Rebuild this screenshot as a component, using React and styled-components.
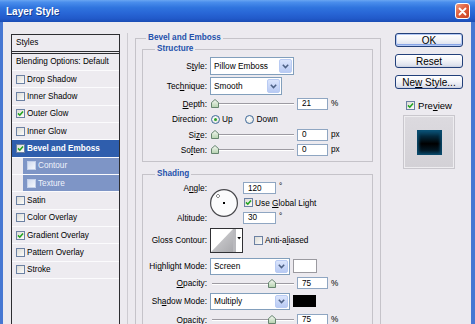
import React from 'react';
import styled, { createGlobalStyle } from 'styled-components';

const FONT = `"Liberation Sans", Arial, sans-serif`;

const GlobalStyle = createGlobalStyle`
  html, body { margin: 0; padding: 0; }
  body { background: #ECEAEF; font-family: ${FONT}; overflow: hidden; }
  #root { width: 475px; height: 324px; }
`;

const Window = styled.div`
  width: 475px;
  height: 324px;
  display: flex;
  flex-direction: column;
  overflow: hidden;
  background: #ECEAEF;
  color: #000;
  font-family: ${FONT};
  font-size: 8.2px;
`;

const TitleBar = styled.div`
  flex: none;
  height: 22px;
  box-sizing: border-box;
  display: flex;
  align-items: center;
  justify-content: space-between;
  padding: 0 5px 0 6px;
  background: linear-gradient(to bottom, #6aa6f2 0%, #4a8eec 10%, #2f74de 35%, #2866d6 60%, #2159c9 85%, #1a4cb4 100%);
`;

const Title = styled.span`
  color: #fff;
  font: bold 10px ${FONT};
  text-shadow: 1px 1px 0 #163f93;
`;

const CloseButton = styled.span`
  width: 15px;
  height: 16px;
  box-sizing: border-box;
  border: 1px solid #fff;
  border-radius: 3px;
  background: linear-gradient(135deg, #f19a7c 0%, #e0603f 45%, #c9401f 100%);
  display: flex;
  align-items: center;
  justify-content: center;
`;

const Frame = styled.div`
  flex: 1;
  min-height: 0;
  display: flex;
  align-items: stretch;
  border-left: 3px solid #4677d3;
  border-right: 4px solid #4677d3;
  padding: 11px 8px 0 8px;
`;

/* ---------- left style list ---------- */
const StyleList = styled.div`
  flex: none;
  width: 109px;
  box-sizing: border-box;
  margin-top: 1px;
  border: 1px solid #2d2d31;
  border-bottom: none;
  background: #EDEBF0;
`;

const ListHeader = styled.div`
  height: 16px;
  line-height: 16px;
  padding-left: 4px;
  border-bottom: 3px double #2d2d31;
`;

const BlendRow = styled.div`
  height: 17px;
  box-sizing: border-box;
  line-height: 16px;
  padding-left: 4px;
  border-bottom: 1px solid #fbfbfd;
  white-space: nowrap;
`;

const EffectRow = styled.div`
  height: 17.35px;
  box-sizing: border-box;
  display: flex;
  border-bottom: 1px solid #fbfbfd;
  padding-left: ${p => (p.$sub ? 11 : 0)}px;
`;

const EffectCell = styled.div`
  flex: 1;
  display: flex;
  align-items: center;
  gap: 2px;
  padding-left: 4px;
  white-space: nowrap;
  background: ${p => (p.$selected ? '#2f5ead' : p.$sub ? '#7e95c6' : 'transparent')};
  color: ${p => (p.$selected ? '#fff' : p.$sub ? '#eef2fb' : '#000')};
  font-weight: ${p => (p.$selected ? 'bold' : 'normal')};
`;

const CheckBoxBox = styled.span`
  flex: none;
  width: 9px;
  height: 9px;
  box-sizing: border-box;
  margin-left: ${p => p.$ml || 0}px;
  border: 1px solid ${p => (p.$light ? '#c3d0ea' : '#6c81a3')};
  background: ${p =>
    p.$light
      ? 'linear-gradient(135deg, #d2dcf0, #f4f7fc)'
      : 'linear-gradient(135deg, #dcdbd5, #fcfcfb)'};
  display: inline-flex;
  align-items: center;
  justify-content: center;
`;

function Check({ checked, light, ml }) {
  return (
    <CheckBoxBox $light={light} $ml={ml}>
      {checked && (
        <svg width="7" height="7" viewBox="0 0 7 7">
          <path d="M1 3.4 L2.8 5.2 L6 1.5" fill="none" stroke="#21a321" strokeWidth="1.6" />
        </svg>
      )}
    </CheckBoxBox>
  );
}

/* ---------- middle ---------- */
const Middle = styled.div`
  flex: none;
  width: 254px;
  box-sizing: border-box;
  margin-left: 7px;
  padding-left: 7px;
  border-left: 1px solid #cdcbd1;
`;

const Group = styled.fieldset`
  margin: ${p => p.$mt || 0}px 0 0 0;
  min-width: 0;
  border: 1px solid #c5c3c9;
  padding: ${p => p.$pad};
`;

const Legend = styled.legend`
  margin-left: ${p => p.$ml}px;
  padding: 0 2px;
  font: bold 8.2px/10px ${FONT};
  color: #2451ab;
`;

const Form = styled.div`
  display: grid;
  grid-template-columns: 64px auto;
  column-gap: 3px;
  grid-template-rows: ${p => p.$rows};
  align-items: center;
  justify-items: start;
`;

const Label = styled.span`
  justify-self: end;
  white-space: nowrap;
  font-size: 8.3px;
  grid-row: ${p => p.$row || 'auto'};
  grid-column: 1;
`;

const Cell = styled.div`
  grid-column: 2;
  grid-row: ${p => p.$row || 'auto'};
  display: flex;
  align-items: center;
`;

const U = styled.span`
  text-decoration: underline;
`;

const Select = styled.div`
  width: ${p => p.$w}px;
  height: ${p => p.$h || 18}px;
  box-sizing: border-box;
  border: 1px solid #829fbc;
  background: #fff;
  display: flex;
  align-items: center;
  padding: 1px;
`;

const SelectText = styled.span`
  flex: 1;
  padding-left: 2px;
  font-size: 8.3px;
  white-space: nowrap;
`;

const SelectButton = styled.span`
  width: 13px;
  align-self: stretch;
  box-sizing: border-box;
  border: 1px solid #b9cbf3;
  border-radius: 2px;
  background: linear-gradient(#dbe5fc, #b8caf3);
  display: flex;
  align-items: center;
  justify-content: center;
`;

function Dropdown({ w, h, value }) {
  return (
    <Select $w={w} $h={h}>
      <SelectText>{value}</SelectText>
      <SelectButton>
        <svg width="7" height="5" viewBox="0 0 7 5">
          <path d="M0.8 0.8 L3.5 3.6 L6.2 0.8" fill="none" stroke="#4d6185" strokeWidth="1.5" />
        </svg>
      </SelectButton>
    </Select>
  );
}

const SliderTrack = styled.div`
  position: relative;
  width: 84px;
  height: 13px;
  flex: none;
  &::before {
    content: '';
    position: absolute;
    left: 2px;
    right: 0;
    top: 6px;
    height: 1px;
    background: #9d9ba2;
    box-shadow: 0 1px 0 #fff;
  }
`;

const ThumbSvg = styled.svg`
  position: absolute;
  top: 2px;
  margin-left: -4px;
`;

function Slider({ pct }) {
  return (
    <SliderTrack>
      <ThumbSvg width="8" height="9" viewBox="0 0 8 9" style={{ left: `${4.5 + pct * 0.773}px` }}>
        <defs>
          <linearGradient id="thumbg" x1="0" y1="0" x2="0" y2="1">
            <stop offset="0" stopColor="#f6f8f4" />
            <stop offset="1" stopColor="#b4d2ae" />
          </linearGradient>
        </defs>
        <path d="M0.5 8.5 V3.6 L4 0.5 L7.5 3.6 V8.5 Z" fill="url(#thumbg)" stroke="#66856f" strokeWidth="1" />
      </ThumbSvg>
    </SliderTrack>
  );
}

const Field = styled.span`
  flex: none;
  display: flex;
  align-items: center;
  box-sizing: border-box;
  width: ${p => p.$w}px;
  height: 12px;
  margin-left: ${p => p.$ml || 0}px;
  border: 1px solid #8fa6c2;
  background: #fff;
  padding-left: 4px;
  font-size: 8.2px;
`;

const Unit = styled.span`
  margin-left: 3px;
  font-size: 8.2px;
  align-self: ${p => (p.$sup ? 'flex-start' : 'center')};
  line-height: 9px;
`;

const RadioDot = styled.span`
  flex: none;
  width: 9px;
  height: 9px;
  box-sizing: border-box;
  margin-left: ${p => p.$ml || 0}px;
  border-radius: 50%;
  border: 1px solid #3e6a9c;
  background: radial-gradient(circle at 40% 40%, #ffffff, #dcdbd5);
  display: inline-flex;
  align-items: center;
  justify-content: center;
  &::after {
    content: '';
    width: ${p => (p.$on ? 3 : 0)}px;
    height: ${p => (p.$on ? 3 : 0)}px;
    border-radius: 50%;
    background: #2aa22a;
  }
`;

const OptionText = styled.span`
  margin-left: ${p => p.$ml ?? 2}px;
  font-size: 8.3px;
  white-space: nowrap;
`;

const AngleBlock = styled.div`
  grid-column: 2;
  grid-row: 1 / span 3;
  display: grid;
  grid-template-columns: 28px auto;
  grid-template-rows: 14px 15px 15px;
  column-gap: 5px;
  align-items: center;
`;

const AngleDial = styled.svg`
  grid-row: 1 / span 3;
  grid-column: 1;
`;

const AngleLine = styled.div`
  grid-column: 2;
  display: flex;
  align-items: center;
`;

const ContourPicker = styled.svg`
  flex: none;
`;

const Swatch = styled.span`
  flex: none;
  width: ${p => p.$w}px;
  height: ${p => p.$h}px;
  box-sizing: border-box;
  margin-left: 3px;
  border: 1px solid ${p => p.$border};
  background: ${p => p.$color};
`;

/* ---------- right side ---------- */
const Side = styled.div`
  flex: none;
  width: 68px;
  margin-left: 14px;
  display: flex;
  flex-direction: column;
  align-items: center;
  gap: 7px;
`;

const Button = styled.div`
  width: 68px;
  height: 14px;
  box-sizing: border-box;
  border: 1px solid #22407a;
  border-radius: 3px;
  background: linear-gradient(#ffffff 0%, #f3f4f8 45%, #dfe3ee 85%, #c8cedf 100%);
  display: flex;
  align-items: center;
  justify-content: center;
  font-size: 10px;
  white-space: nowrap;
  box-shadow: ${p => (p.$default ? 'inset 0 0 0 1px #b4c9f4, inset 0 -1px 0 1px #88a5e6' : 'none')};
`;

const PreviewRow = styled.div`
  display: flex;
  align-items: center;
  gap: 3px;
  margin-top: 4px;
  font-size: 9.5px;
`;

const PreviewFrame = styled.div`
  width: 52px;
  height: 54px;
  box-sizing: border-box;
  margin-top: -3px;
  border: 1px solid #c9c7cd;
  background: linear-gradient(#dcdadf, #d3d1d6);
  box-shadow: inset 0 0 0 1px #eeedf0;
  display: flex;
  align-items: center;
  justify-content: center;
`;

const PreviewSwatch = styled.div`
  width: 25px;
  height: 25px;
  background: linear-gradient(#0d5a80 0%, #03283c 25%, #000 55%, #021622 80%, #0a4766 100%);
  box-shadow: inset 2px 0 3px #0b4c6e, inset -2px 0 3px #0b4c6e;
`;

const effects = [
  { name: 'Drop Shadow' },
  { name: 'Inner Shadow' },
  { name: 'Outer Glow', checked: true },
  { name: 'Inner Glow' },
  { name: 'Bevel and Emboss', checked: true, selected: true },
  { name: 'Contour', sub: true },
  { name: 'Texture', sub: true },
  { name: 'Satin' },
  { name: 'Color Overlay' },
  { name: 'Gradient Overlay', checked: true },
  { name: 'Pattern Overlay' },
  { name: 'Stroke' },
];

export default function App() {
  return (
    <Window>
      <GlobalStyle />
      <TitleBar>
        <Title>Layer Style</Title>
        <CloseButton>
          <svg width="9" height="9" viewBox="0 0 9 9">
            <path d="M1.5 1.5 L7.5 7.5 M7.5 1.5 L1.5 7.5" stroke="#fff" strokeWidth="1.8" strokeLinecap="round" />
          </svg>
        </CloseButton>
      </TitleBar>
      <Frame>
        <StyleList>
          <ListHeader>Styles</ListHeader>
          <BlendRow>Blending Options: Default</BlendRow>
          {effects.map(e => (
            <EffectRow key={e.name} $sub={e.sub}>
              <EffectCell $selected={e.selected} $sub={e.sub}>
                <Check checked={e.checked} light={e.sub} />
                <span>{e.name}</span>
              </EffectCell>
            </EffectRow>
          ))}
        </StyleList>

        <Middle>
          <Group $pad="1px 7px 0 6px">
            <Legend $ml={4}>Bevel and Emboss</Legend>
            <Group $pad="2px 0 4px 0">
              <Legend $ml={12}>Structure</Legend>
              <Form $rows="20px 20px 15px 16px 15px 15px">
                <Label>S<U>t</U>yle:</Label>
                <Cell><Dropdown w={84} value="Pillow Emboss" /></Cell>
                <Label>Tec<U>h</U>nique:</Label>
                <Cell><Dropdown w={72} value="Smooth" /></Cell>
                <Label><U>D</U>epth:</Label>
                <Cell><Slider pct={0} /><Field $w={31} $ml={3}>21</Field><Unit>%</Unit></Cell>
                <Label>Direction:</Label>
                <Cell>
                  <RadioDot $on $ml={1} /><OptionText>Up</OptionText>
                  <RadioDot $ml={12} /><OptionText $ml={3}>Down</OptionText>
                </Cell>
                <Label>Si<U>z</U>e:</Label>
                <Cell><Slider pct={0} /><Field $w={31} $ml={3}>0</Field><Unit>px</Unit></Cell>
                <Label>So<U>f</U>ten:</Label>
                <Cell><Slider pct={0} /><Field $w={31} $ml={3}>0</Field><Unit>px</Unit></Cell>
              </Form>
            </Group>

            <Group $mt={7} $pad="2px 0 4px 0">
              <Legend $ml={12}>Shading</Legend>
              <Form $rows="14px 15px 15px 30px 22px 12px 24px 13px">
                <Label $row={1}>A<U>n</U>gle:</Label>
                <AngleBlock>
                  <AngleDial width="28" height="28" viewBox="0 0 28 28">
                    <circle cx="14" cy="14" r="13.4" fill="#fbfbfc" stroke="#48484c" strokeWidth="1.2" />
                    <rect x="13" y="13" width="2" height="2" fill="#000" />
                    <path d="M8 5 V6 M8 8 V9 M6 7 H7 M9 7 H10" stroke="#222" strokeWidth="1" />
                  </AngleDial>
                  <AngleLine><Field $w={33}>120</Field><Unit $sup>°</Unit></AngleLine>
                  <AngleLine>
                    <Check checked ml={1} />
                    <OptionText>Use <U>G</U>lobal Light</OptionText>
                  </AngleLine>
                  <AngleLine><Field $w={33}>30</Field><Unit $sup>°</Unit></AngleLine>
                </AngleBlock>
                <Label $row={3}>Altitude:</Label>
                <Label $row={4}>Gloss Contour:</Label>
                <Cell $row={4}>
                  <ContourPicker width="33" height="25" viewBox="0 0 33 25">
                    <defs>
                      <linearGradient id="cg" x1="0" y1="0" x2="1" y2="1">
                        <stop offset="0" stopColor="#d9d9db" />
                        <stop offset="1" stopColor="#a9a9ad" />
                      </linearGradient>
                    </defs>
                    <rect x="0.5" y="0.5" width="32" height="24" fill="#fff" stroke="#303034" />
                    <path d="M1 24 L23 1 L23 24 Z" fill="url(#cg)" />
                    <rect x="23" y="1" width="3" height="23" fill="#b9b9bd" />
                    <path d="M27.3 9 H31 L29.15 11.6 Z" fill="#000" />
                  </ContourPicker>
                  <Check ml={11} />
                  <OptionText>Anti-a<U>l</U>iased</OptionText>
                </Cell>
                <Label $row={5}>Hi<U>g</U>hlight Mode:</Label>
                <Cell $row={5}>
                  <Dropdown w={80} h={17} value="Screen" />
                  <Swatch $w={24} $h={14} $color="#fff" $border="#9b9aa0" />
                </Cell>
                <Label $row={6}><U>O</U>pacity:</Label>
                <Cell $row={6}><Slider pct={75} /><Field $w={31} $ml={3}>75</Field><Unit>%</Unit></Cell>
                <Label $row={7}>Sh<U>a</U>dow Mode:</Label>
                <Cell $row={7}>
                  <Dropdown w={80} h={17} value="Multiply" />
                  <Swatch $w={23} $h={12} $color="#000" $border="#000" />
                </Cell>
                <Label $row={8}>Opa<U>c</U>ity:</Label>
                <Cell $row={8}><Slider pct={75} /><Field $w={31} $ml={3}>75</Field><Unit>%</Unit></Cell>
              </Form>
            </Group>
          </Group>
        </Middle>

        <Side>
          <Button $default><span>OK</span></Button>
          <Button><span>Reset</span></Button>
          <Button><span>Ne<U>w</U> Style...</span></Button>
          <PreviewRow>
            <Check checked />
            <span>Pre<U>v</U>iew</span>
          </PreviewRow>
          <PreviewFrame>
            <PreviewSwatch />
          </PreviewFrame>
        </Side>
      </Frame>
    </Window>
  );
}
